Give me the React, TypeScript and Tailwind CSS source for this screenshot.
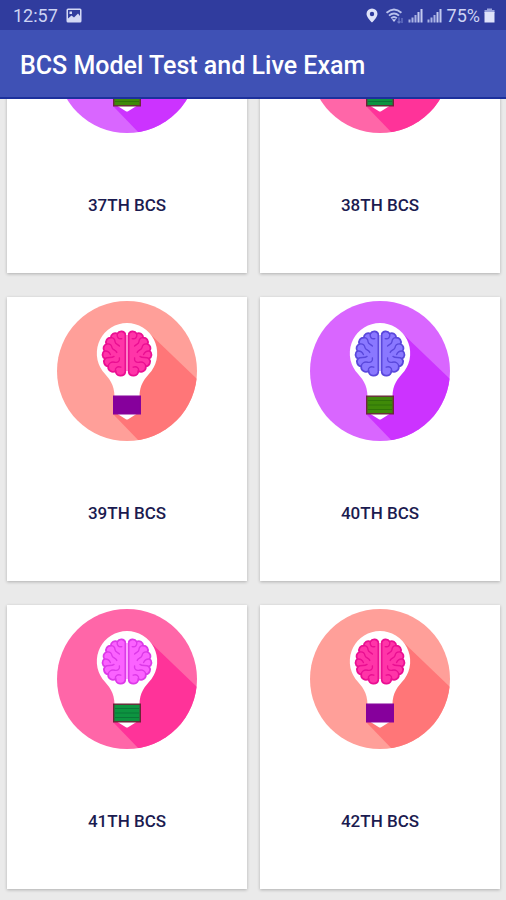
import { useId } from "react";

type Palette = {
  disc: string;
  shade: string;
  brain: string;
  fold: string;
  seam: string;
  base: string;
  rim: string;
  thread: string;
};

const coral: Palette = {
  disc: "#ff9f99",
  shade: "#ff7678",
  brain: "#ff35a8",
  fold: "#ea0f92",
  seam: "#ff72c2",
  base: "#86009c",
  rim: "#86009c",
  thread: "#86009c",
};

const violet: Palette = {
  disc: "#d966ff",
  shade: "#cc33ff",
  brain: "#8a78ff",
  fold: "#5a48dc",
  seam: "#a79aff",
  base: "#3f8a08",
  rim: "#6b2a3c",
  thread: "#2f7408",
};

const rose: Palette = {
  disc: "#ff66a8",
  shade: "#ff3399",
  brain: "#fb62ff",
  fold: "#dc3ae8",
  seam: "#ff96ff",
  base: "#0d9440",
  rim: "#6b2438",
  thread: "#0a7638",
};

const exams = [
  { name: "37TH BCS", palette: violet },
  { name: "38TH BCS", palette: rose },
  { name: "39TH BCS", palette: coral },
  { name: "40TH BCS", palette: violet },
  { name: "41TH BCS", palette: rose },
  { name: "42TH BCS", palette: coral },
];

function BrainHalf({ palette }: { palette: Palette }) {
  return (
    <g stroke={palette.fold} strokeLinecap="round" strokeLinejoin="round">
      <path
        fill={palette.brain}
        strokeWidth="1.8"
        d="M68.4 33.2 A4.4 4.4 0 0 0 60.4 32.6 A4.6 4.6 0 0 0 53.8 36.6 A4.6 4.6 0 0 0 49.4 43 A4.6 4.6 0 0 0 47.4 50 A4.4 4.4 0 0 0 48 57.6 A4.8 4.8 0 0 0 51.2 65.4 A4.8 4.8 0 0 0 58.6 70 A5 5 0 0 0 68.4 71 Z"
      />
      <path
        fill="none"
        strokeWidth="1.4"
        d="M60.4 32.6 C59.4 36 61.6 38.4 64.8 37.6 M53.8 36.6 C56.4 36.4 58 38.4 58 40.6 C58 43 60.6 43.4 62.4 45 M49.4 43 C53 42.4 54.6 44.4 55 46.6 C55.6 49 58.4 48.6 59.8 51.4 M47.4 50 C50.4 49.6 52.4 51.2 53.4 53.6 M48 57.6 C51 55.6 54.4 57.4 57 55.4 M51.2 65.4 C51.6 62 54.4 60.4 57.6 61.2 C61 62 63 60 62.4 57 M58.6 70 C57.6 67 60.4 65 63.8 66.2"
      />
    </g>
  );
}

function BulbIcon({ palette }: { palette: Palette }) {
  const clip = useId();
  return (
    <svg viewBox="0 0 140 140" className="size-[140px]" aria-hidden="true">
      <clipPath id={clip}>
        <circle cx="70" cy="70" r="70" />
      </clipPath>
      <circle cx="70" cy="70" r="70" fill={palette.disc} />
      <path
        d="M91 31 L142 80 V142 H84 L56 113 L70 60Z"
        fill={palette.shade}
        clipPath={`url(#${clip})`}
      />
      <path
        d="M70 22 A30.3 30.3 0 0 0 45.5 70 C52 77.5 57.5 83 57.5 96 H82.5 C82.500 83 88 77.5 94.5 70 A30.3 30.3 0 0 0 70 22Z"
        fill="#fff"
      />
      <path d="M60.500 113 H79.5 L71.5 118 Q70 119 68.5 118Z" fill="#fff" />
      <BrainHalf palette={palette} />
      <g transform="translate(140 0) scale(-1 1)">
        <BrainHalf palette={palette} />
      </g>
      <path d="M70 34V71" stroke={palette.seam} strokeWidth="1.6" />
      <path d="M70 28V34M70 70V76" stroke="#fff" strokeWidth="1.6" />
      <rect x="56.7" y="95.2" width="26.6" height="17.6" fill={palette.base} stroke={palette.rim} strokeWidth="1.4" />
      <path d="M58 99.5H82M58 104H82M58 108.5H82" stroke={palette.thread} strokeWidth="1" />
    </svg>
  );
}

function PhotoIcon() {
  return (
    <svg viewBox="0 0 16 16" className="size-4" aria-hidden="true">
      <path
        fill="#d3d8f5"
        fillRule="evenodd"
        d="M2 0.5H14Q15.5 0.5 15.5 2V13Q15.5 14.5 14 14.5H2Q0.5 14.5 0.5 13V2Q0.5 0.5 2 0.5ZM2 2V10.5L5.5 7.5L8 9.5L12 5.5L14 8V2ZM3.5 3.5H6V6H3.5Z"
      />
    </svg>
  );
}

function PinIcon() {
  return (
    <svg viewBox="0 0 12 15" className="h-[15px] w-3" aria-hidden="true">
      <path
        fill="#dfe3fa"
        fillRule="evenodd"
        d="M6 0.5A5.5 5.5 0 0 0 0.500 6C0.5 9.5 6 14.5 6 14.5S11.5 9.5 11.5 6A5.5 5.5 0 0 0 6 0.5ZM6 3.8A2.2 2.2 0 1 1 6 8.2A2.2 2.2 0 1 1 6 3.8Z"
      />
    </svg>
  );
}

function WifiIcon() {
  return (
    <svg viewBox="0 0 18 16" className="h-4 w-[18px]" aria-hidden="true">
      <g fill="none" stroke="#b9c1ec" strokeWidth="1.9">
        <path d="M0.6 4.8Q8 -1.8 15.4 4.800" />
        <path d="M3 7.6Q8 3.2 13 7.6" />
        <path d="M5.2 10.2Q8 7.6 10.8 10.2" />
      </g>
      <path d="M5.8 11.2H10.2L8 14Z" fill="#c9cff2" />
      <path d="M13 9.5V15M11.5 13.5L13 15L14.5 13.5M16 15V10" fill="none" stroke="#6f7cc9" strokeWidth="1.2" />
    </svg>
  );
}

function SignalIcon() {
  return (
    <svg viewBox="0 0 15 15" className="size-[15px]" aria-hidden="true">
      <path
        fill="#a9b2e4"
        d="M0.5 11.5H2.5V14.5H0.5ZM3.5 9.5H5.5V14.5H3.5ZM6.5 7H8.5V14.5H6.5Z"
      />
      <path fill="#c3caef" d="M9.5 4H11.5V14.5H9.5ZM12.5 1H14.5V14.5H12.5Z" />
    </svg>
  );
}

function BatteryIcon() {
  return (
    <svg viewBox="0 0 11 15" className="h-[15px] w-[11px]" aria-hidden="true">
      <path d="M3 0.5H8V2H10.5V5H0.5V2H3Z" fill="#9aa4dd" />
      <path d="M0.5 4H10.5V14.5H0.5Z" fill="#dfe3fa" />
    </svg>
  );
}

export default function App() {
  return (
    <div className="flex h-screen flex-col overflow-hidden bg-[#eaeaea] font-['Roboto',sans-serif]">
      <div className="flex h-[30px] shrink-0 items-center justify-between bg-[#303c9e] pt-px pr-[11px] pl-[13px] text-[#cdd3f3]">
        <div className="flex items-center gap-2">
          <span className="text-[18px] leading-6">12:57</span>
          <PhotoIcon />
        </div>
        <div className="flex items-center gap-1">
          <PinIcon />
          <span className="pl-1">
            <WifiIcon />
          </span>
          <SignalIcon />
          <SignalIcon />
          <span className="pl-px text-[18px] leading-6">75%</span>
          <BatteryIcon />
        </div>
      </div>
      <header className="flex h-[69px] shrink-0 items-center border-b-2 border-[#1c309c] bg-[#3f51b5] px-5 pt-1">
        <h1 className="text-[25px] leading-8 font-medium text-white">BCS Model Test and Live Exam</h1>
      </header>
      <main className="min-h-0 flex-1 overflow-hidden">
        <div className="-mt-[110px] grid grid-cols-2 gap-x-[13px] gap-y-6 pr-[6px] pb-6 pl-[7px]">
          {exams.map((exam) => (
            <button
              key={exam.name}
              type="button"
              className="flex h-[284px] flex-col items-center gap-[60px] bg-white pt-1 shadow-[0_1px_3px_rgba(0,0,0,0.25)]"
            >
              <BulbIcon palette={exam.palette} />
              <span className="text-[17px] leading-6 font-medium text-[#1b1b50]">{exam.name}</span>
            </button>
          ))}
        </div>
      </main>
    </div>
  );
}
